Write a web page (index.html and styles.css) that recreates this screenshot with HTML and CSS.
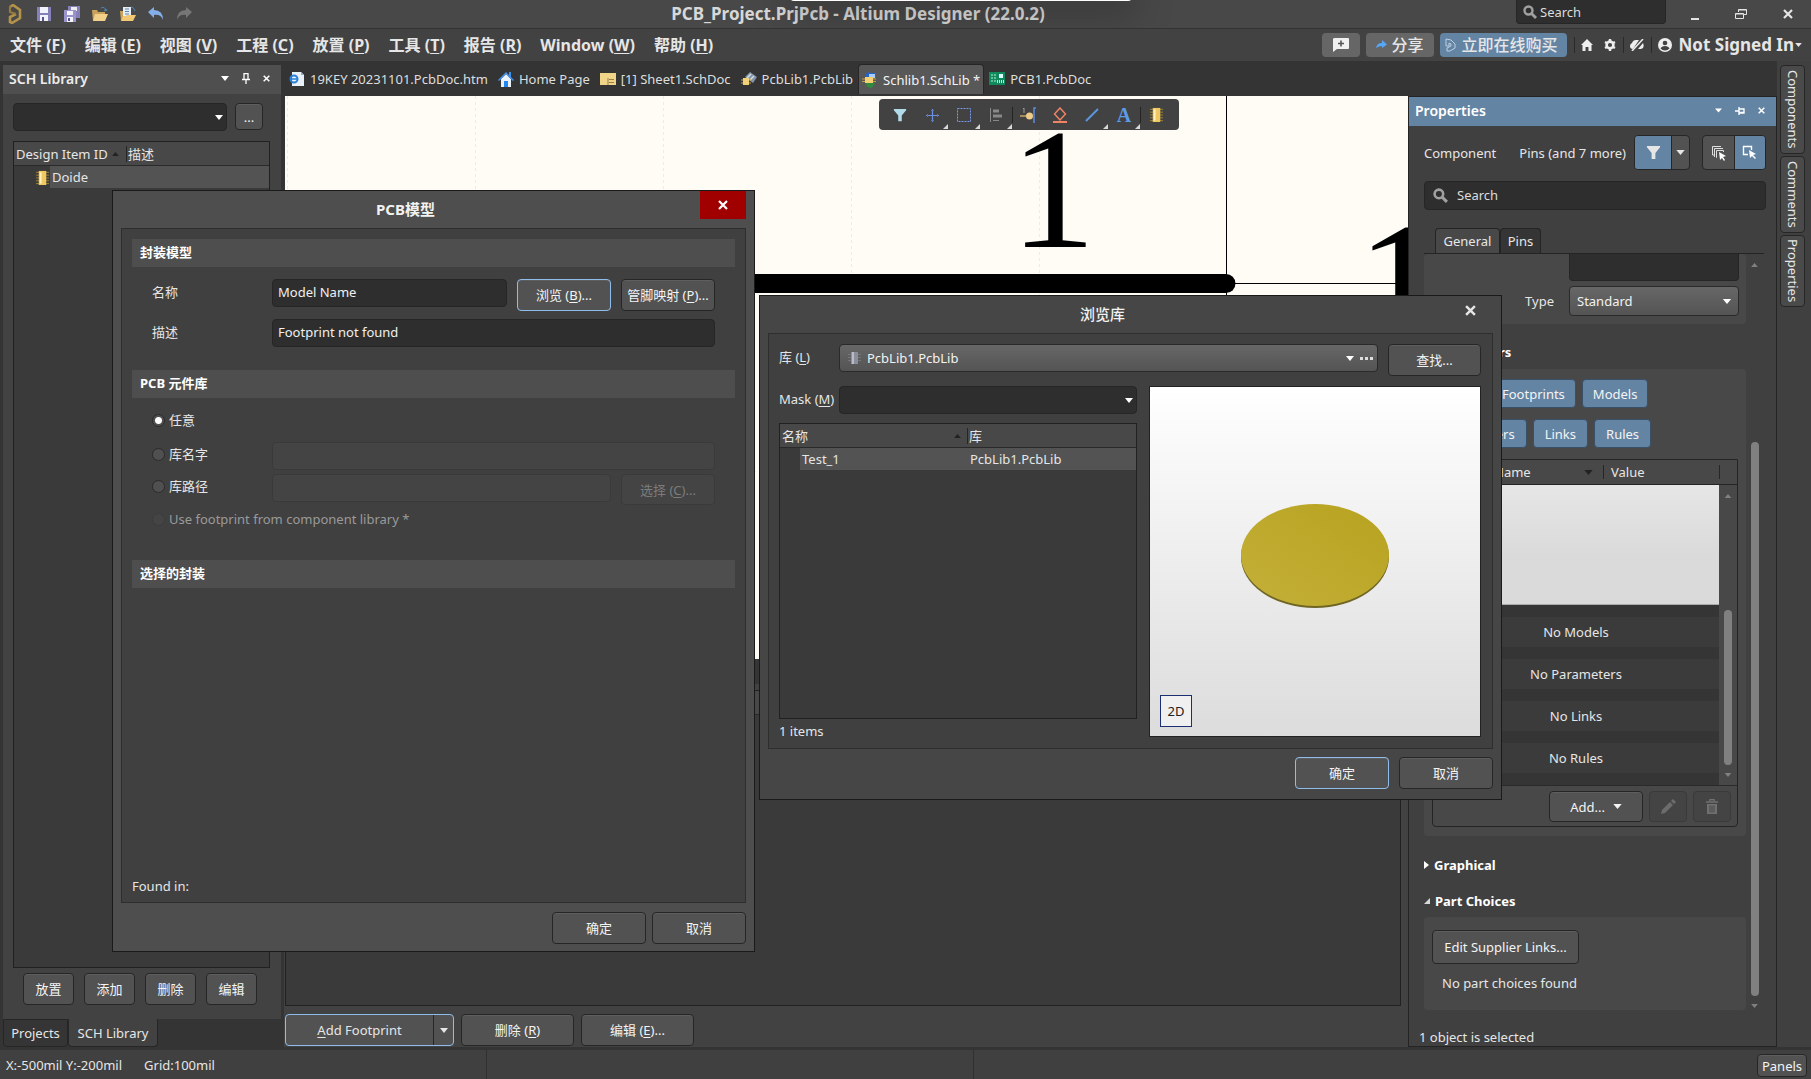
FILE: index.html
```html
<!DOCTYPE html>
<html lang="zh-CN">
<head>
<meta charset="utf-8">
<title>PCB_Project.PrjPcb - Altium Designer (22.0.2)</title>
<link rel="stylesheet" href="styles.css">
</head>
<body>
<svg width="0" height="0" class="defs" aria-hidden="true">
  <symbol id="chip" viewBox="0 0 16 16"><path d="M1 2.5h14M1 5.5h14M1 8.500h14M1 11.500h14M1 14.500h14" stroke="#a08432"/><rect x="4" y="1" width="8" height="15" fill="#f0c862"/><path d="M6 2.500v12" stroke="#fff0bd" stroke-width="2"/></symbol>
  <symbol id="down" viewBox="0 0 10 6"><path d="M0 0h10L5 6z" fill="currentColor"/></symbol>
  <symbol id="up" viewBox="0 0 10 6"><path d="M0 6h10L5 0z" fill="currentColor"/></symbol>
  <symbol id="cross" viewBox="0 0 10 10"><path d="M1 1l8 8M9 1L1 9" stroke="currentColor" stroke-width="2.200"/></symbol>
  <symbol id="lens" viewBox="0 0 14 14"><circle cx="5.500" cy="5.500" r="4" fill="none" stroke="#a0a0a0" stroke-width="2.400"/><path d="M8.500 8.500l4.500 4.500" stroke="#a0a0a0" stroke-width="2.800"/></symbol>
  <symbol id="funnel" viewBox="0 0 16 16"><path d="M1 1h14v1.500L10 8.500V15H6V8.500L1 2.500z" fill="currentColor"/></symbol>
  <symbol id="corner" viewBox="0 0 5 5"><path d="M5 0v5H0z" fill="#d8d8d8"/></symbol>
</svg>

<div class="app">
  <header class="titlebar">
    <div class="quick">
      <svg width="15" height="20" viewBox="0 0 15 20"><path d="M3 3L6 1l7 5v8l-8 5-2-1v-5l6-3" fill="none" stroke="#b3934a" stroke-width="2.600"/><path d="M3 2v6l6 2" fill="none" stroke="#967a3b" stroke-width="2.200"/></svg>
      <button aria-label="Save"><svg width="16" height="16" viewBox="0 0 16 16"><path d="M1 1h14v14H1z" fill="#8580b8"/><path d="M4 1h8v6H4zM4 9h8v6H4z" fill="#f2f2fa"/><path d="M6 11h2v4H6z" fill="#55518a"/></svg></button>
      <button aria-label="Save all"><svg width="16" height="16" viewBox="0 0 16 16"><path d="M4 0h12v12H4z" fill="#8580b8"/><path d="M7 1h6v4H7z" fill="#eee"/><path d="M0 4h12v12H0z" fill="#9a94cc"/><path d="M3 5h6v4H3zM3 11h6v5H3z" fill="#f4f4fa"/><path d="M4 12h2v3H4z" fill="#55518a"/></svg></button>
      <button aria-label="Open"><svg width="16" height="16" viewBox="0 0 16 16"><path d="M0 4h5l1 2h7v9H1z" fill="#c9a35c"/><path d="M3 8h13l-3 7H1z" fill="#f3d08a"/><path d="M9 2q4-2 5 3M12 4l2 1 1-2" stroke="#4f86b4" fill="none"/></svg></button>
      <button aria-label="Open project"><svg width="16" height="16" viewBox="0 0 16 16"><path d="M0 5h4v10H1z" fill="#c9a35c"/><path d="M3 1h8v11H3z" fill="#e6edf5"/><path d="M5 3h4M5 5.500h4M5 8h4" stroke="#5c86ad"/><path d="M3 10h3l1-1h9l-3 6H1z" fill="#f3c873"/><path d="M11 1q3 0 4 4" stroke="#4f86b4" fill="none"/></svg></button>
      <button aria-label="Undo"><svg width="16" height="16" viewBox="0 0 16 16"><path d="M0 6l6-5v3q9 0 9 10-2-6-9-5v3z" fill="#84aee8"/></svg></button>
      <button aria-label="Redo"><svg width="16" height="16" viewBox="0 0 16 16"><path d="M16 6l-6-5v3q-9 0-9 10 2-6 9-5v3z" fill="#767676"/></svg></button>
    </div>
    <h1>PCB_Project.PrjPcb - Altium Designer (22.0.2)</h1>
    <label class="top-search"><svg width="14" height="14"><use href="#lens"/></svg><input type="search" placeholder="Search" aria-label="Search"></label>
    <div class="winbtns">
      <button aria-label="Minimize"><svg width="12" height="12" viewBox="0 0 12 12"><path d="M2 11h8" stroke="#e4e4e4" stroke-width="2"/></svg></button>
      <button aria-label="Restore"><svg width="12" height="12" viewBox="0 0 12 12"><path d="M3.500 4V1.500h8v5H9M.5 5.500h8v5h-8zM.5 6h8M3.500 2h8" stroke="#e4e4e4" fill="none"/></svg></button>
      <button aria-label="Close"><svg width="10" height="10"><use href="#cross"/></svg></button>
    </div>
    <div class="notice"></div>
  </header>

  <nav class="menubar">
    <a href="#">文件 (<u>F</u>)</a><a href="#">编辑 (<u>E</u>)</a><a href="#">视图 (<u>V</u>)</a><a href="#">工程 (<u>C</u>)</a><a href="#">放置 (<u>P</u>)</a><a href="#">工具 (<u>T</u>)</a><a href="#">报告 (<u>R</u>)</a><a href="#">Window (<u>W</u>)</a><a href="#">帮助 (<u>H</u>)</a>
    <div class="account">
      <button class="pill" aria-label="Comment"><svg width="18" height="14" viewBox="0 0 18 14"><path d="M3 0h13q1 0 1 1v9q0 1-1 1H5l-4 3V1q0-1 2-1z" fill="#f0f0f0"/><path d="M6 5.500h6M9 2.500v6" stroke="#555" stroke-width="1.600"/></svg></button>
      <button class="pill"><svg width="11" height="10" viewBox="0 0 11 10"><path d="M0 8q1-5 6-5V0l5 4.500L6 8V6Q3 6 0 8z" fill="#56a7f5"/></svg>分享</button>
      <button class="pill blue"><svg width="11" height="14" viewBox="0 0 11 14"><path d="M1 1l5 1 4 4v4l-5 3H2v-3l4-2V6L4 5v3H1z" fill="none" stroke="#bcd0e4"/></svg>立即在线购买</button>
      <i class="sep"></i>
      <button aria-label="Home"><svg width="12" height="12" viewBox="0 0 12 12"><path d="M6 0l6 6h-1.500v6H7.500V8h-3v4h-3V6H0z" fill="#eee"/></svg></button>
      <button aria-label="Settings"><svg width="12" height="12" viewBox="0 0 12 12"><circle cx="6" cy="6" r="3.400" fill="none" stroke="#eee" stroke-width="2.600"/><path d="M6 0v2M6 10v2M1 3l2 1M9 8l2 1M1 9l2-1M9 4l2-1" stroke="#eee" stroke-width="2.400"/></svg></button>
      <i class="sep"></i>
      <button aria-label="Offline"><svg width="14" height="12" viewBox="0 0 14 12"><path d="M3 10q-3 0-3-3 0-2 2-3 1-3 4-3h3zM8 10l5-6q2 5-2 6z" fill="#eee"/><path d="M2 12L13 0" stroke="#eee" stroke-width="1.500"/></svg></button>
      <i class="sep"></i>
      <button class="user"><svg width="14" height="14" viewBox="0 0 14 14"><circle cx="7" cy="7" r="7" fill="#eee"/><circle cx="7" cy="5" r="2.300" fill="#424242"/><path d="M2.500 10.500q1-2.500 4.500-2.500t4.500 2.500Q9.500 12.500 7 12.500t-4.500-2z" fill="#424242"/></svg>Not Signed In<svg width="7" height="4"><use href="#down"/></svg></button>
    </div>
  </nav>

  <main class="main">
    <aside class="sch">
      <div class="sch-panel">
        <div class="panel-head"><h2>SCH Library</h2>
          <button aria-label="Panel menu"><svg width="8" height="5"><use href="#down"/></svg></button>
          <button aria-label="Pin"><svg width="8" height="11" viewBox="0 0 8 11"><path d="M2 0v6M6 0v6M2 .5h4M0 6.500h8M4 7v4" stroke="#fff" stroke-width="1.300" fill="none"/></svg></button>
          <button aria-label="Close panel"><svg width="7" height="7"><use href="#cross"/></svg></button>
        </div>
        <div class="sch-filter">
          <div class="combo"><input type="text" class="field" aria-label="Library"><svg width="8" height="5"><use href="#down"/></svg></div>
          <button class="btn dots">...</button>
        </div>
        <div class="list grow">
          <table>
            <thead><tr><th class="c-id">Design Item ID <svg width="7" height="4" class="ink"><use href="#up"/></svg></th><th>描述</th></tr></thead>
            <tbody><tr><td colspan="2" class="item"><svg width="15" height="15"><use href="#chip"/></svg><span>Doide</span></td></tr></tbody>
          </table>
        </div>
        <div class="sch-actions"><button class="btn">放置</button><button class="btn">添加</button><button class="btn">删除</button><button class="btn">编辑</button></div>
      </div>
      <div class="side-tabs"><button>Projects</button><button class="on">SCH Library</button></div>
    </aside>

    <section class="work">
      <nav class="doc-tabs">
        <a href="#"><svg width="16" height="16" viewBox="0 0 16 16"><path d="M3 1h9l3 3v11H3z" fill="#e8f0f8"/><path d="M12 1v3h3" fill="#9ab"/><circle cx="5" cy="8" r="3.500" fill="none" stroke="#2a82d8" stroke-width="2"/><path d="M2 8h6" stroke="#2a82d8" stroke-width="1.500"/></svg>19KEY 20231101.PcbDoc.htm</a>
        <a href="#"><svg width="16" height="16" viewBox="0 0 16 16"><path d="M3 8l5-5 5 5v8H3z" fill="#e9f1fb"/><path d="M0 9l8-8 3 3V1h2v5l3 3-1 1-7-7-7 7z" fill="#3c90f0"/><path d="M6 10h4v6H6z" fill="#2485f4"/></svg>Home Page</a>
        <a href="#"><svg width="16" height="12" viewBox="0 0 16 12"><path d="M0 0h16v12H0z" fill="#f0d488"/><path d="M9 6.500h5M9 9.500h5M8 5v7" stroke="#9a8046"/></svg>[1] Sheet1.SchDoc</a>
        <a href="#"><svg width="16" height="14" viewBox="0 0 16 14"><path d="M4 5l5-5 7 5-4 6z" fill="#8294a6"/><path d="M6 6l4-4M9 8l4-4" stroke="#d3dde6" stroke-width="1.500"/><path d="M2 6h6v7H2z" fill="#f3d179"/><path d="M0 8h2M0 11h2M8 8h2M8 11h2" stroke="#c8a450"/></svg>PcbLib1.PcbLib</a>
        <a href="#" class="on"><svg width="16" height="16" viewBox="0 0 16 16"><path d="M3 3Q6-1 9 1h5v5H4z" fill="#2463c8"/><path d="M7 2h6v4H7z" fill="#a6cdf8"/><path d="M4 11h9l-3 5-5-1z" fill="#2f8a3c"/><path d="M3 5h8v6H3z" fill="#f5cf74"/><path d="M0 7h3M0 9.500h3M11 7h3M11 9.500h3" stroke="#c39c3f"/></svg>Schlib1.SchLib *</a>
        <a href="#"><svg width="16" height="14" viewBox="0 0 16 14"><path d="M0 0h16v13H0z" fill="#0e8a5c"/><path d="M2 3h5M2 6h5M2 9h5" stroke="#b9f0d6" stroke-dasharray="2 1"/><path d="M10 2h4v4h-4z" fill="#dff"/><path d="M8 9.500h7" stroke="#b9f0d6" stroke-width="3" stroke-dasharray="1 1"/></svg>PCB1.PcbDoc</a>
      </nav>

      <div class="stage">
        <div class="center">
          <div class="canvas">
            <svg width="100%" height="100%">
              <g stroke="#ececec" stroke-dasharray="3 3"><path d="M2.500 0v600M190.500 0v600M378.500 0v600M566.500 0v600M754.500 0v600M0 375.500h1400"/></g>
              <path d="M941.500 0v600M941 187.500h300" stroke="#000"/>
              <path d="M300 187.500h641" stroke="#000" stroke-width="19" stroke-linecap="round"/>
              <text x="725" y="151" class="pin-no">1</text><text x="1072" y="245" class="pin-no">1</text>
            </svg>
            <div class="active-bar">
              <button aria-label="Filter" class="pale"><svg width="14" height="14"><use href="#funnel"/></svg></button>
              <button aria-label="Move"><svg width="14" height="14" viewBox="0 0 14 14"><path d="M7.500 1v13M1 7.500h13" stroke="#6c90e0" stroke-width="1.200"/><path d="M6 2.500h3M6 12.500h3M2.500 6v3M12.500 6v3" stroke="#5673b4"/></svg><svg class="more" width="5" height="5"><use href="#corner"/></svg></button>
              <button aria-label="Select"><svg width="16" height="16" viewBox="0 0 16 16"><rect x="1.500" y="1.500" width="13" height="13" fill="none" stroke="#7a98e8" stroke-dasharray="2 1"/></svg><svg class="more" width="5" height="5"><use href="#corner"/></svg></button>
              <button aria-label="Align"><svg width="14" height="14" viewBox="0 0 14 14"><path d="M1.500 0v14" stroke="#888"/><path d="M4 3h6M4 8h9" stroke="#888" stroke-width="3"/><path d="M4 12.500h6" stroke="#888"/></svg><svg class="more" width="5" height="5"><use href="#corner"/></svg></button>
              <button aria-label="Place pin" class="line"><svg width="16" height="16" viewBox="0 0 16 16"><path d="M0 9h8" stroke="#c9a663" stroke-width="1.500"/><circle cx="9.500" cy="9" r="3.500" fill="#eccb8b"/><path d="M16 1h-2v15" stroke="#5c8be6" fill="none" stroke-width="1.500"/><path d="M3 2l1-1v5" stroke="#999" fill="none"/></svg></button>
              <button aria-label="Place directive"><svg width="14" height="16" viewBox="0 0 14 16"><path d="M7 1l5.500 6L7 13 1.500 7z" fill="none" stroke="#ee8365" stroke-width="1.500"/><path d="M0 15h14" stroke="#ee8365" stroke-width="2"/></svg></button>
              <button aria-label="Place line"><svg width="14" height="14" viewBox="0 0 14 14"><path d="M1 13L13 1" stroke="#5a97dc" stroke-width="2"/></svg><svg class="more" width="5" height="5"><use href="#corner"/></svg></button>
              <button aria-label="Place text" class="letter">A<svg class="more" width="5" height="5"><use href="#corner"/></svg></button>
              <button aria-label="Place part" class="line"><svg width="15" height="15"><use href="#chip"/></svg></button>
            </div>
          </div>
          <div class="editor">
            <div class="editor-strip"></div>
            <div class="editor-list"><div class="editor-list-head"></div></div>
            <div class="editor-actions">
              <div class="split"><button><u>A</u>dd Footprint</button><button aria-label="More footprints"><svg width="8" height="5"><use href="#down"/></svg></button></div>
              <button class="btn">删除 (<u>R</u>)</button><button class="btn">编辑 (<u>E</u>)...</button>
            </div>
          </div>
        </div>

        <aside class="props">
          <div class="panel-head blue"><h2>Properties</h2>
            <button aria-label="Panel menu"><svg width="7" height="5"><use href="#down"/></svg></button>
            <button aria-label="Pin"><svg width="10" height="8" viewBox="0 0 10 8"><path d="M0 4h4M4 0v8M4 2h5v4H4M4 5.500h5" stroke="#fff" stroke-width="1.400" fill="none"/></svg></button>
            <button aria-label="Close panel"><svg width="7" height="7"><use href="#cross"/></svg></button>
          </div>
          <div class="scope"><span>Component</span><span class="pins">Pins (and 7 more)</span>
            <div class="seg"><button class="on w36" aria-label="Filter"><svg width="15" height="15"><use href="#funnel"/></svg></button><button class="w18" aria-label="Filter options"><svg width="9" height="5"><use href="#down"/></svg></button></div>
            <div class="seg"><button class="w32" aria-label="Select all types"><svg width="16" height="16" viewBox="0 0 16 16"><path d="M4 10H1.500V1.500H10M3.500 12V3.500H12M6 12.500H5.500v-7h7V7" stroke="#e0e0e0" fill="none"/><path d="M8 7l7 4-3 1 2 3-1 1-2-3-2 2z" fill="#fff"/></svg></button><button class="on w32" aria-label="Select one type"><svg width="16" height="16" viewBox="0 0 16 16"><path d="M6 9.500H1.500v-8h8V5" stroke="#fff" fill="none" stroke-width="1.400"/><path d="M7 5l7 4-3 1 3 3-1 1-3-3-2 2z" fill="#fff"/></svg></button></div>
          </div>
          <label class="prop-search"><svg width="15" height="15"><use href="#lens"/></svg><input type="search" placeholder="Search" aria-label="Search properties"></label>
          <div class="prop-tabs"><button class="on">General</button><button>Pins</button></div>
          <div class="prop-scroll">
            <div class="prop-body">
              <div class="card first">
                <textarea class="field" aria-label="Description"></textarea>
                <div class="type"><label for="type">Type</label><div class="combo"><select id="type" class="select"><option>Standard</option></select><svg width="10" height="5"><use href="#down"/></svg></div></div>
              </div>
              <h3 class="h-param"><svg width="7" height="7"><use href="#corner"/></svg>Parameters</h3>
              <div class="card params">
                <div class="chips"><button class="w53">All</button><button>Footprints</button><button>Models</button></div>
                <div class="chips kinds"><button>Parameters</button><button>Links</button><button>Rules</button></div>
                <div class="grid-frame">
                  <table>
                    <thead><tr><th class="g-name">Name<svg width="9" height="5" class="ink"><use href="#down"/></svg></th><th class="g-value">Value</th><th class="g-bar"></th></tr></thead>
                    <tbody>
                      <tr><td colspan="2" class="thumb"></td><td rowspan="6" class="g-scroll"><div class="vbar"><svg width="8" height="4"><use href="#up"/></svg><i></i><svg width="8" height="4"><use href="#down"/></svg></div></td></tr>
                      <tr><td colspan="2" class="none">No Models</td></tr>
                      <tr><td colspan="2" class="none">No Parameters</td></tr>
                      <tr><td colspan="2" class="none">No Links</td></tr>
                      <tr><td colspan="2" class="none">No Rules</td></tr>
                      <tr><td colspan="2" class="tail"></td></tr>
                    </tbody>
                  </table>
                  <div class="grid-actions"><button class="btn add">Add... <svg width="9" height="5"><use href="#down"/></svg></button><button class="btn off" disabled aria-label="Edit"><svg width="15" height="15" viewBox="0 0 15 15"><path d="M0 15l1-4 8-8 3 3-8 8zM10 2l2-2 3 3-2 2z" fill="#6c6c6c"/></svg></button><button class="btn off" disabled aria-label="Delete"><svg width="12" height="15" viewBox="0 0 12 15"><path d="M0 3h12M4 2V.5h4V2" stroke="#707070" stroke-width="1.500" fill="none"/><path d="M1 5h10v10H1z" fill="#707070"/><path d="M4 6.500v7M6 6.500v7M8 6.500v7" stroke="#484848"/></svg></button></div>
                </div>
              </div>
              <h3><svg width="5" height="8" viewBox="0 0 5 8"><path d="M0 0v8l5-4z" fill="#fff"/></svg>Graphical</h3>
              <h3 class="h-part"><svg width="6" height="6"><use href="#corner"/></svg>Part Choices</h3>
              <div class="card part"><button class="btn">Edit Supplier Links...</button><p>No part choices found</p></div>
            </div>
            <div class="vbar outer"><svg width="9" height="4"><use href="#up"/></svg><i></i><svg width="9" height="4"><use href="#down"/></svg></div>
          </div>
          <p class="selected">1 object is selected</p>
        </aside>
      </div>
    </section>

    <aside class="strip"><button>Components</button><button>Comments</button><button>Properties</button></aside>
  </main>

  <footer class="status"><div>X:-500mil Y:-200mil<span>Grid:100mil</span></div><div></div><div class="last"><button class="btn">Panels</button></div></footer>
</div>

<div class="dialog model" role="dialog" aria-label="PCB模型">
  <div class="dlg-head"><h2>PCB模型</h2><button class="x red" aria-label="Close"><svg width="10" height="10"><use href="#cross"/></svg></button></div>
  <div class="dlg-body">
    <h3>封装模型</h3>
    <div class="row r-name"><label for="mname">名称</label><input id="mname" class="field" value="Model Name"><button class="btn focus">浏览 (<u>B</u>)...</button><button class="btn">管脚映射 (<u>P</u>)...</button></div>
    <div class="row r-desc"><label for="mdesc">描述</label><input id="mdesc" class="field" value="Footprint not found"></div>
    <h3 class="s2">PCB 元件库</h3>
    <div class="row radio first"><label><input type="radio" name="lib" checked>任意</label></div>
    <div class="row radio"><label><input type="radio" name="lib">库名字</label><input class="field off" disabled aria-label="库名字"></div>
    <div class="row radio"><label><input type="radio" name="lib">库路径</label><input class="field off" disabled aria-label="库路径"><button class="btn off" disabled>选择 (<u>C</u>)...</button></div>
    <div class="row radio"><label class="dim"><input type="radio" name="lib" disabled>Use footprint from component library *</label></div>
    <h3 class="s3">选择的封装</h3>
    <p class="found">Found in:</p>
  </div>
  <div class="dlg-foot"><button class="btn">确定</button><button class="btn">取消</button></div>
</div>

<div class="dialog browse" role="dialog" aria-label="浏览库">
  <div class="dlg-head"><h2>浏览库</h2><button class="x" aria-label="Close"><svg width="11" height="11"><use href="#cross"/></svg></button></div>
  <div class="dlg-body">
    <div class="lib-row"><label for="lib">库 (<u>L</u>)</label>
      <div class="combo lib"><select id="lib" class="select"><option>PcbLib1.PcbLib</option></select><svg class="lead" width="13" height="14" viewBox="0 0 13 14"><path d="M0 3.500h13M0 6.500h13M0 9.500h13" stroke="#75757c"/><path d="M3 1h7v12H3z" fill="#8b8f9c"/><path d="M4 1h2v12H4z" fill="#b9bcc8"/></svg><svg width="28" height="5" viewBox="0 0 28 5"><path d="M0 0h8L4 5z" fill="#fff"/><path d="M14 1h3v3h-3zM19 1h3v3h-3zM24 1h3v3h-3z" fill="#ddd"/></svg></div>
      <button class="btn">查找...</button>
    </div>
    <div class="lib-main">
      <div class="lib-left">
        <div class="mask"><label for="mask">Mask (<u>M</u>)</label><div class="combo"><input id="mask" class="field"><svg width="8" height="5"><use href="#down"/></svg></div></div>
        <div class="list grow">
          <table>
            <thead><tr><th class="c-name"><span>名称</span><svg width="7" height="4" class="ink"><use href="#up"/></svg></th><th>库</th></tr></thead>
            <tbody><tr class="hit"><td><span>Test_1</span></td><td>PcbLib1.PcbLib</td></tr></tbody>
          </table>
        </div>
        <p>1 items</p>
      </div>
      <div class="preview">
        <svg class="disc" width="150" height="106" viewBox="0 0 150 106"><defs><linearGradient id="gold" x1="0" y1="1" x2="1" y2="0"><stop offset="0" stop-color="#c4b038"/><stop offset="1" stop-color="#b7a21f"/></linearGradient></defs><ellipse cx="75" cy="54" rx="74" ry="51" fill="#6f6524"/><ellipse cx="75" cy="52" rx="74" ry="51" fill="url(#gold)"/></svg>
        <button>2D</button>
      </div>
    </div>
  </div>
  <div class="dlg-foot"><button class="btn focus">确定</button><button class="btn">取消</button></div>
</div>
</body>
</html>
```
FILE: styles.css
```css
*{box-sizing:border-box}
body,h1,h2,h3,p,table{margin:0;padding:0}
body{font:13px/18px "Noto Sans","Noto Sans CJK SC",sans-serif;color:#e6e6e6;background:#343434;overflow:hidden}
button,input,select,textarea{font:inherit;color:inherit;margin:0;padding:0;border:0;background:none;outline:0}
input,textarea,select{min-width:0}
button{display:flex;align-items:center;justify-content:center;white-space:nowrap;cursor:pointer}
button u,label u{display:inline;text-underline-offset:2px}
a{color:inherit;text-decoration:none;white-space:nowrap}
svg{flex:none;display:block}
table{border-collapse:separate;border-spacing:0;width:100%;table-layout:fixed}
th{font-weight:400;text-align:left}
td,th{padding:0}
.defs{position:absolute}
.app{display:flex;flex-direction:column;height:100vh}

.titlebar{position:relative;display:flex;height:29px;flex:none;background:#484848;border-bottom:1px solid #333;overflow:hidden}
.quick{display:flex;align-items:center;gap:12px;padding-left:7px;width:192px}
.quick svg+button{margin-left:2px}
.titlebar h1{flex:1;padding-left:8px;text-align:center;font-size:17px;line-height:28px;font-weight:700;color:#d8d8d8}
.top-search{display:flex;align-items:center;gap:3px;width:150px;height:24px;padding-left:6px;background:#2e2e2e;border:1px solid #262626;border-top:0;border-radius:0 0 4px 4px}
.top-search input{width:110px}
input::placeholder{color:#dcdcdc;opacity:1}
.winbtns{display:flex;width:139px;margin-left:6px}
.winbtns button{flex:1}
.notice{position:absolute;left:790px;top:-8px;width:342px;height:9px;background:#fff;border-radius:4px;box-shadow:0 4px 36px 8px rgba(0,0,0,.25)}

.menubar{display:flex;align-items:center;gap:19px;height:32px;flex:none;padding-left:10px;background:#424242;font-size:16px;font-weight:700}
.menubar u{text-decoration-thickness:1px;text-underline-offset:2px}
.account{margin-left:auto;display:flex;align-items:center;gap:6px;padding-right:9px}
.pill{height:24px;padding:0 10px;gap:5px;border-radius:4px;background:#666;font-weight:500}
.pill.blue{background:#6484a4;padding:0 9px 0 5px;gap:6px}
.sep{width:1px;height:16px;background:#2a2a2a}
button+.sep{margin-left:1px}
.account button+button:not(.pill){margin-left:5px}
.account .user{gap:7px;font-size:17px}
.account .user svg:last-child{margin-left:-6px}

.main{display:flex;flex:1;min-height:0}
.sch{width:281px;padding:4px 0 3px 3px;display:flex;flex-direction:column;flex:none}
.sch-panel{flex:1;display:flex;flex-direction:column;background:#424242;min-height:0}
.panel-head{display:flex;align-items:center;gap:13px;height:29px;flex:none;padding:0 11px 2px 6px;background:#4f4f4f;color:#fff}
.panel-head h2{flex:1;font-size:14px;line-height:18px;font-weight:600;color:#ececec}
.panel-head.blue{background:#6484a4}
.panel-head.blue h2{color:#fff}
.sch-filter{display:flex;gap:8px;padding:9px 18px 10px 10px}
.sch-filter .combo{flex:1}
.combo{display:grid;align-items:center;color:#fff}
.combo>*{grid-area:1/1}
.combo>svg{justify-self:end;margin-right:4px;pointer-events:none}
.field{width:100%;height:28px;padding:0 5px 2px;background:#2e2e2e;border:1px solid #262626;border-radius:4px;color:#f0f0f0}
.select{width:100%;height:30px;padding:0 7px;appearance:none;background:linear-gradient(#676767,#545454);border:1px solid #2a2a2a;border-radius:4px;color:#f2f2f2}
.btn{height:32px;background:#525252;border:1px solid #262626;border-radius:4px;color:#f4f4f4;box-shadow:inset 0 1px #5e5e5e}
.btn.focus{border-color:#8fbce8}
.btn.off,.field.off{background:#444;border-color:#3a3a3a;color:#7c7c7c;box-shadow:none}
.sch-filter .dots{width:28px;height:27px}
.grow{flex:1;min-height:0}
.list{background:#3a3a3a;border:1px solid #212121}
.list th{height:24px;background:#484848;border-bottom:1px solid #2a2a2a;padding-left:2px}
.list th+th{background:linear-gradient(#262626,#262626) 0 4px/1px 16px no-repeat #484848;padding-left:2px}
.sch .list{margin:0 11px 0 10px}
.c-id{width:112px;white-space:nowrap}
.c-id svg{display:inline-block;margin-left:1px;vertical-align:3px}
.ink{color:#222}
.item{padding-left:21px}
.item svg,.item span{display:inline-block;vertical-align:top}
.item svg{margin-top:4px}
.item span{width:calc(100% - 15px);height:22px;line-height:22px;padding-left:2px;background:#535353}
.sch-actions{display:flex;gap:10px;padding:5px 20px 14px}
.sch-actions .btn{width:51px}
.side-tabs{display:flex;height:28px;flex:none}
.side-tabs button{width:65px;height:28px;background:#353535;border:1px solid #262626;border-radius:0 0 4px 4px}
.side-tabs .on{width:90px;background:#424242;border-top:0}

.work{flex:1;display:flex;flex-direction:column;min-width:0;padding-left:3px}
.doc-tabs{display:flex;height:35px;flex:none;padding:3px 0 0}
.doc-tabs a{display:flex;align-items:center;gap:5px;height:30px;padding:0 5px;color:#dedede}
.doc-tabs a.on{background:#585858;border:1px solid #262626;border-bottom:0;border-radius:4px 4px 0 0;color:#f4f4f4;padding:0 3px}
.stage{display:flex;flex:1;min-height:0}
.center{flex:1;display:flex;flex-direction:column;min-width:0}
.canvas{position:relative;flex:1;min-height:0;background:#fffcf6;margin-left:1px;overflow:hidden}
.canvas>svg{position:absolute}
.pin-no{font:172px "Liberation Serif",serif;fill:#000}
.active-bar{position:absolute;left:594px;top:3px;display:flex;height:31px;padding:0 7px 0 5px;background:#424242;border-radius:4px}
.active-bar button{position:relative;width:32px;height:31px}
.active-bar .line::before{content:"";position:absolute;left:0;top:8px;width:1px;height:16px;background:#242424}
.active-bar .pale{color:#b2dbea}
.active-bar .more{position:absolute;right:0;bottom:1px}
.active-bar .letter{font:700 20px/20px "Liberation Serif",serif;color:#5c9be6}
.editor{height:388px;flex:none;display:flex;flex-direction:column;background:#424242;margin-bottom:3px}
.editor-strip{height:25px;background:#353535;flex:none}
.editor-list{flex:1;margin:6px 7px 8px 1px;background:#3a3a3a;border:1px solid #212121}
.editor-list-head{height:24px;background:#484848;border-bottom:1px solid #2a2a2a}
.editor-actions{display:flex;gap:7px;padding:0 0 1px 1px}
.editor-actions .btn{width:113px}
.split{display:flex;width:169px;height:32px;border:1px solid #8fbce8;border-radius:4px;background:#525252}
.split button{flex:1;display:block}
.split button+button{display:flex;flex:none;width:20px;border-left:1px solid #262626}

.props{width:369px;flex:none;display:flex;flex-direction:column;background:#404040;border:1px solid #242424;margin-bottom:3px}
.scope{display:flex;align-items:center;padding:9px 10px 0 15px}
.pins{margin-left:auto;margin-right:8px}
.seg{display:flex;height:35px;border:1px solid #262626;border-radius:4px;background:#525252;overflow:hidden}
.seg+.seg{margin-left:12px}
.seg button+button{border-left:1px solid #262626}
.seg .on{background:#6484a4}
.w36{width:36px}.w18{width:18px}.w32{width:31px}
.prop-search{display:flex;align-items:center;gap:9px;height:29px;margin:11px 10px 0 15px;padding:0 0 1px 8px;background:#2e2e2e;border:1px solid #262626;border-radius:4px}
.prop-search input{flex:1}
.prop-tabs{display:flex;margin:18px 12px 0 15px;padding-left:11px;border-bottom:1px solid #242424;flex:none}
.prop-tabs button{height:25px;width:41px;background:#353535;border:1px solid #242424;border-bottom:0;border-radius:4px 4px 0 0}
.prop-tabs .on{width:65px;background:#484848}
.prop-scroll{flex:1;display:flex;min-height:0;padding-left:15px}
.prop-body{width:322px;flex:none;overflow:hidden}
.card{background:#484848;border-radius:4px}
.card.first{display:flex;flex-direction:column;align-items:flex-end;height:70px;padding-right:7px;gap:5px}
.card textarea{width:170px;height:27px;border-radius:0 0 4px 4px;border-top:0;resize:none}
.type{display:flex;align-items:center;gap:15px}
.type .combo{width:170px}
.type .combo svg{margin-right:7px}
.prop-body h3{display:flex;align-items:center;gap:5px;height:20px;font-size:13px;line-height:20px;font-weight:700;color:#fff}
.prop-body .h-param{margin:18px 0 7px}
.prop-body .h-part{margin:16px 0 6px}
.card.params{padding:10px 8px 9px;margin-bottom:19px}
.chips{display:flex;gap:6px;margin-bottom:11px}
.chips button{height:29px;padding:0 10px;background:#6484a4;border:1px solid #3a5068;border-radius:4px;color:#f4f4f4}
.chips.kinds button{padding:0 11px}
.chips .w53{width:53px}
.grid-frame{border:1px solid #242424;border-radius:0 0 4px 4px}
.grid-frame thead th{height:25px;border-bottom:1px solid #242424}
.grid-frame .g-name{padding-left:61px}
.g-name svg{float:right;margin:7px 10px 0 0}
.g-value{width:116px}
.grid-frame .g-value{padding-left:8px}
.g-bar{width:18px}
.g-value,.g-bar{background:linear-gradient(#262626,#262626) 0 5px/1px 14px no-repeat}
.thumb{height:120px;background:linear-gradient(#e6e6e6,#dadada 60%);border-bottom:1px solid #aaa}
.none{height:42px;text-align:center;background:#3b3b3b;border-top:12px solid #353535}
.tail{height:12px;background:#353535}
.g-scroll{height:300px}
.vbar{display:flex;flex-direction:column;align-items:center;height:300px;padding:9px 0 8px;color:#808080}
.vbar i{width:8px;flex:1;margin:112px 0 8px;border-radius:4px;background:#808080}
.vbar.outer{height:auto;padding:9px 0 2px 4px}
.vbar.outer i{margin:175px 0 8px}
.grid-actions{display:flex;justify-content:flex-end;gap:6px;padding:5px 6px 4px;border-top:1px solid #2a2a2a}
.grid-actions .btn{width:38px;height:31px}
.grid-actions .add{width:94px;gap:8px}
.card.part{height:93px;padding:13px 8px;display:flex;flex-direction:column;align-items:flex-start;gap:10px}
.card.part .btn{height:34px;width:147px}
.card.part p{padding-left:10px}
.selected{height:36px;flex:none;padding:18px 0 0 10px}

.strip{width:34px;flex:none;padding:4px 6px 0 3px;display:flex;flex-direction:column;gap:2px;background:#404040;margin-bottom:3px}
.strip button{writing-mode:vertical-rl;width:25px;height:89px;background:#4a4a4a;border:1px solid #262626;border-radius:4px;font-size:13px}
.strip button+button{height:77px}
.strip button:last-child{height:72px}

.status{display:flex;height:29px;flex:none;background:#404040}
.status div{width:487px;padding:6px 6px 5px;border-right:1px solid #303030}
.status span{margin-left:22px}
.status .last{flex:1;width:auto;border:0;display:flex;justify-content:flex-end;padding:4px 4px 2px}
.status .btn{width:50px;height:23px}

.dialog{position:absolute;display:flex;flex-direction:column;border:1px solid #1a1a1a;padding:0 8px}
.dlg-head{position:relative;flex:none}
.dlg-head h2{height:37px;line-height:36px;text-align:center;font-size:15px;font-weight:500;color:#f2f2f2}
.dlg-head .x{position:absolute;right:0;top:0;width:46px;height:28px}
.dlg-body{border:1px solid #2e2e2e;background:#404040;flex:1;min-height:0;display:flex;flex-direction:column}
.dlg-foot{display:flex;justify-content:flex-end;flex:none}
.dlg-foot .btn{width:94px}
.model{left:112px;top:190px;width:643px;height:762px;background:#4e4e4e}
.model .dlg-head h2{padding-right:56px;font-weight:700}
.model .red{background:#a00000;color:#fff}
.model .dlg-body{padding:10px 10px 7px}
.model .dlg-foot{gap:6px;padding:9px 0 7px}
.model h3{height:28px;flex:none;padding-left:8px;background:#4e4e4e;font-size:13px;line-height:27px;font-weight:700;color:#fff}
.row{display:flex;align-items:flex-start;padding:0 20px;gap:10px}
.row>label{width:110px;flex:none;line-height:27px}
.row .field{flex:1}
.row .btn{width:94px;flex:none}
.r-name,.r-desc{height:40px}
.r-name{margin-top:12px}
.model .s2{margin-top:11px}
.row.radio{height:32px}
.row.radio.first{height:36px;margin-top:10px;margin-bottom:-2px}
.row.radio>label{display:flex;align-items:center;gap:4px;height:24px;white-space:nowrap}
.radio .btn{height:31px}
.row.radio .dim{color:#9a9a9a;width:auto;height:26px}
input[type=radio]{appearance:none;width:13px;height:13px;border-radius:50%;background:#505050;border:1px solid #2a2a2a}
input[type=radio]:checked{background:radial-gradient(circle,#fff 3px,#505050 4px)}
input[type=radio]:disabled{background:#444;border-color:#3c3c3c}
.model .s3{margin-top:22px}
.found{margin-top:auto}

.browse{left:759px;top:295px;width:743px;height:505px;background:#464646}
.browse .dlg-head h2{padding-right:56px}
.browse .dlg-body{padding:10px 11px 4px 10px}
.browse .dlg-foot{gap:10px;padding:8px 0 10px}
.lib-row{display:flex;align-items:flex-start;gap:10px;margin-bottom:10px}
.lib-row label,.mask label{width:60px;flex:none;line-height:27px}
.lib-row .lib{flex:1;margin-left:-10px}
.lib .select{height:28px;padding-left:27px}
.lib .lead{justify-self:start;margin-left:9px}
.lib-row .btn{width:93px}
.lib-main{flex:1;display:flex;gap:12px;min-height:0}
.lib-left{flex:1;display:flex;flex-direction:column}
.mask{display:flex;margin-bottom:9px;white-space:nowrap}
.mask .combo{flex:1}
.lib-left p{line-height:25px}
.c-name{width:187px}
.c-name svg{float:right;margin:7px 6px 0 0}
.hit td{height:22px;padding-left:3px;background:#535353}
.hit td:first-child{padding-left:20px;background:#3a3a3a}
.hit td:first-child span{display:block;height:22px;line-height:22px;padding-left:2px;background:#535353}
.preview{position:relative;width:332px;margin-bottom:7px;display:grid;place-items:center;background:linear-gradient(#fff,#dcdcdc);border:1px solid #222}
.preview .disc{margin-bottom:12px}
.preview button{position:absolute;left:10px;bottom:9px;width:32px;height:32px;background:#f0f0f0;border:1px solid #1c2f70;color:#222}
```
